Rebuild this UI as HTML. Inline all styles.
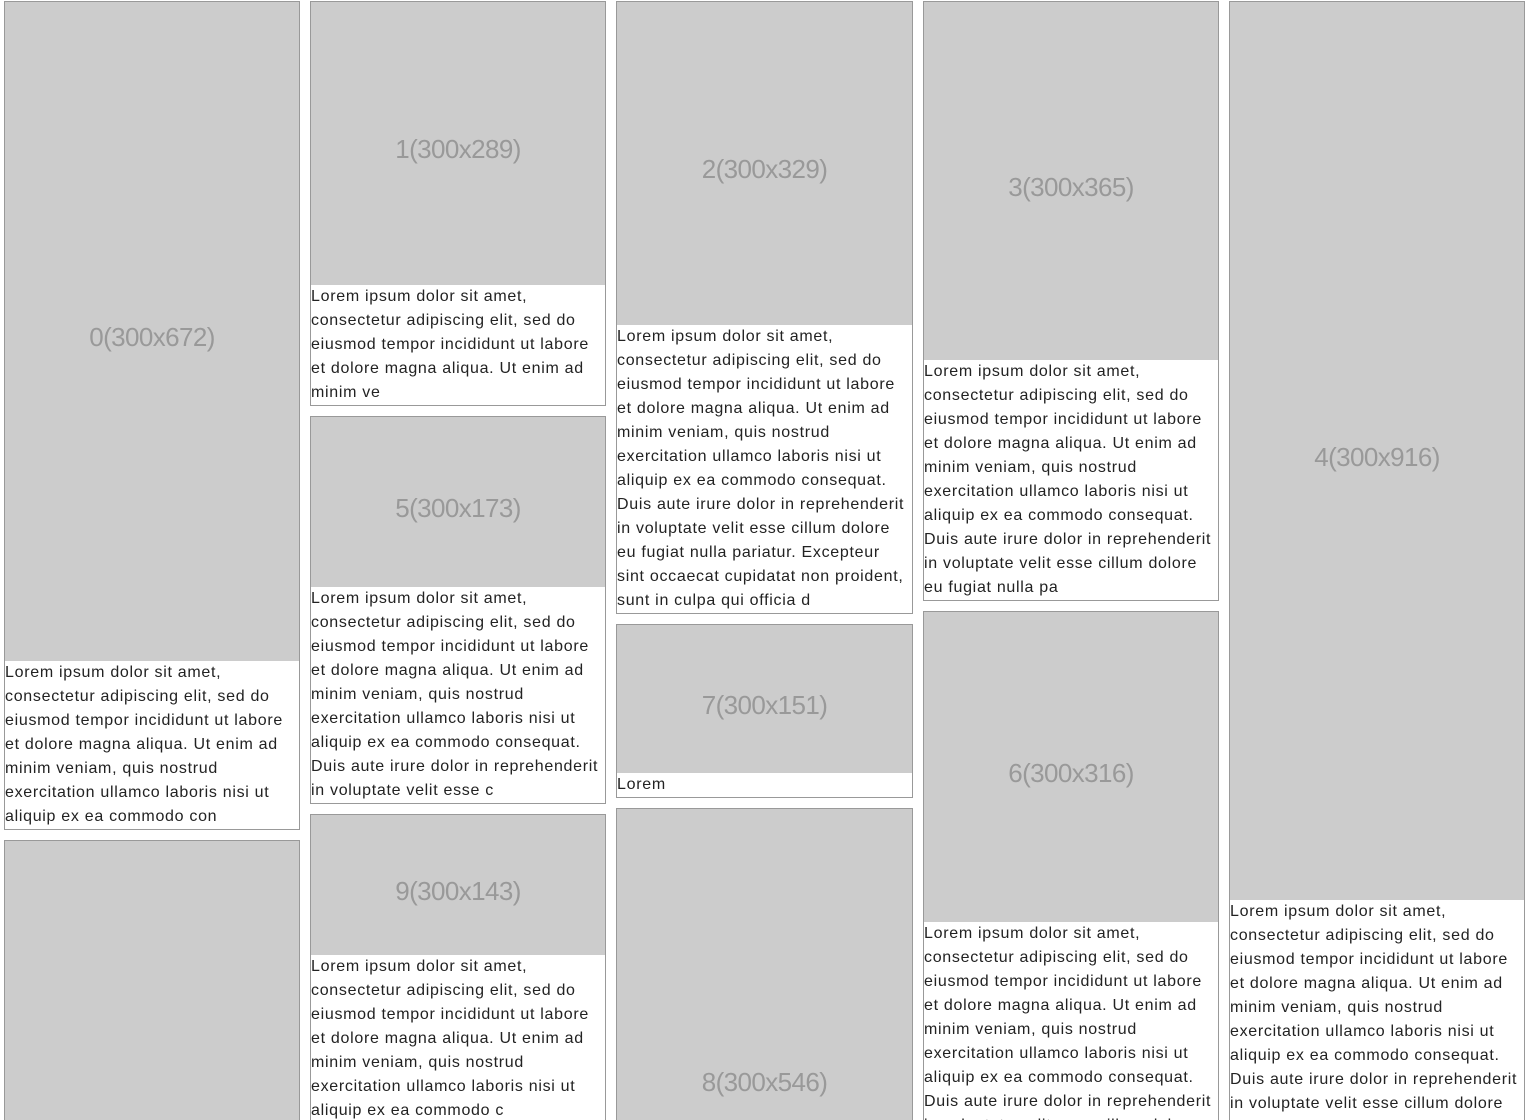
<!DOCTYPE html>
<html><head><meta charset="utf-8"><style>
html,body{margin:0;padding:0;background:#fff;width:1529px;height:1120px;overflow:hidden}
#w{position:relative;width:1529px;height:1120px;overflow:hidden}
.col{position:absolute;top:1px;width:296px;height:1119px;overflow:hidden}
.it{border:1px solid #999;margin-bottom:10px;background:#fff}
.im{background:#ccc;display:flex;align-items:center;justify-content:center;color:#999;font-family:"Liberation Sans Narrow","Liberation Sans",sans-serif;font-size:26px;letter-spacing:-0.6px;box-sizing:border-box;padding-top:12px}
.tx{font-family:"Liberation Sans",sans-serif;font-size:16px;line-height:24px;color:#222;white-space:nowrap;overflow:hidden;letter-spacing:0.7px}
</style></head><body><div id="w">
<div class="col" style="left:4px">
<div class="it"><div class="im" style="height:659px">0(300x672)</div><div class="tx">Lorem ipsum dolor sit amet,<br>consectetur adipiscing elit, sed do<br>eiusmod tempor incididunt ut labore<br>et dolore magna aliqua. Ut enim ad<br>minim veniam, quis nostrud<br>exercitation ullamco laboris nisi ut<br>aliquip ex ea commodo con</div></div>
<div class="it"><div class="im" style="height:600px"></div></div>
</div>
<div class="col" style="left:310px">
<div class="it"><div class="im" style="height:283px">1(300x289)</div><div class="tx">Lorem ipsum dolor sit amet,<br>consectetur adipiscing elit, sed do<br>eiusmod tempor incididunt ut labore<br>et dolore magna aliqua. Ut enim ad<br>minim ve</div></div>
<div class="it"><div class="im" style="height:170px">5(300x173)</div><div class="tx">Lorem ipsum dolor sit amet,<br>consectetur adipiscing elit, sed do<br>eiusmod tempor incididunt ut labore<br>et dolore magna aliqua. Ut enim ad<br>minim veniam, quis nostrud<br>exercitation ullamco laboris nisi ut<br>aliquip ex ea commodo consequat.<br>Duis aute irure dolor in reprehenderit<br>in voluptate velit esse c</div></div>
<div class="it"><div class="im" style="height:140px">9(300x143)</div><div class="tx">Lorem ipsum dolor sit amet,<br>consectetur adipiscing elit, sed do<br>eiusmod tempor incididunt ut labore<br>et dolore magna aliqua. Ut enim ad<br>minim veniam, quis nostrud<br>exercitation ullamco laboris nisi ut<br>aliquip ex ea commodo c</div></div>
</div>
<div class="col" style="left:616px;width:297px">
<div class="it"><div class="im" style="height:323px">2(300x329)</div><div class="tx">Lorem ipsum dolor sit amet,<br>consectetur adipiscing elit, sed do<br>eiusmod tempor incididunt ut labore<br>et dolore magna aliqua. Ut enim ad<br>minim veniam, quis nostrud<br>exercitation ullamco laboris nisi ut<br>aliquip ex ea commodo consequat.<br>Duis aute irure dolor in reprehenderit<br>in voluptate velit esse cillum dolore<br>eu fugiat nulla pariatur. Excepteur<br>sint occaecat cupidatat non proident,<br>sunt in culpa qui officia d</div></div>
<div class="it"><div class="im" style="height:148px">7(300x151)</div><div class="tx">Lorem</div></div>
<div class="it"><div class="im" style="height:535px">8(300x546)</div></div>
</div>
<div class="col" style="left:923px">
<div class="it"><div class="im" style="height:358px">3(300x365)</div><div class="tx">Lorem ipsum dolor sit amet,<br>consectetur adipiscing elit, sed do<br>eiusmod tempor incididunt ut labore<br>et dolore magna aliqua. Ut enim ad<br>minim veniam, quis nostrud<br>exercitation ullamco laboris nisi ut<br>aliquip ex ea commodo consequat.<br>Duis aute irure dolor in reprehenderit<br>in voluptate velit esse cillum dolore<br>eu fugiat nulla pa</div></div>
<div class="it"><div class="im" style="height:310px">6(300x316)</div><div class="tx">Lorem ipsum dolor sit amet,<br>consectetur adipiscing elit, sed do<br>eiusmod tempor incididunt ut labore<br>et dolore magna aliqua. Ut enim ad<br>minim veniam, quis nostrud<br>exercitation ullamco laboris nisi ut<br>aliquip ex ea commodo consequat.<br>Duis aute irure dolor in reprehenderit<br>in voluptate velit esse cillum dolore</div></div>
</div>
<div class="col" style="left:1229px">
<div class="it"><div class="im" style="height:898px">4(300x916)</div><div class="tx">Lorem ipsum dolor sit amet,<br>consectetur adipiscing elit, sed do<br>eiusmod tempor incididunt ut labore<br>et dolore magna aliqua. Ut enim ad<br>minim veniam, quis nostrud<br>exercitation ullamco laboris nisi ut<br>aliquip ex ea commodo consequat.<br>Duis aute irure dolor in reprehenderit<br>in voluptate velit esse cillum dolore<br>eu fugiat nulla pariatur.</div></div>
</div>
</div></body></html>
